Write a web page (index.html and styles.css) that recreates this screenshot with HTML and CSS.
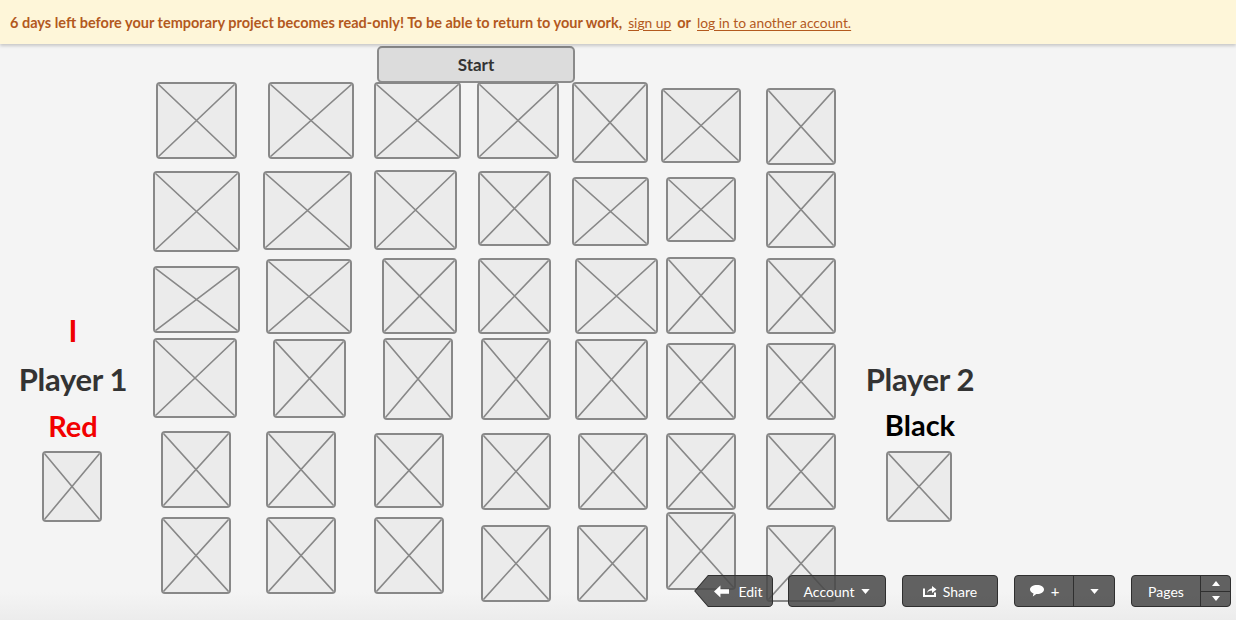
FILE: index.html
```html
<!DOCTYPE html>
<html>
<head>
<meta charset="utf-8">
<link rel="stylesheet" href="styles.css">
</head>
<body>
<div class="banner">
  <span>6 days left before your temporary project becomes read-only! To be able to return to your work,</span>
  <a class="lnk">sign up</a>
  <span>or</span>
  <a class="lnk">log in to another account.</a>
</div>
<div class="canvas">
  <div class="start">Start</div>

  <div class="ph r1c1"><svg viewBox="0 0 100 100" preserveAspectRatio="none"><path d="M0 0L100 100M100 0L0 100"/></svg></div>
  <div class="ph r1c2"><svg viewBox="0 0 100 100" preserveAspectRatio="none"><path d="M0 0L100 100M100 0L0 100"/></svg></div>
  <div class="ph r1c3"><svg viewBox="0 0 100 100" preserveAspectRatio="none"><path d="M0 0L100 100M100 0L0 100"/></svg></div>
  <div class="ph r1c4"><svg viewBox="0 0 100 100" preserveAspectRatio="none"><path d="M0 0L100 100M100 0L0 100"/></svg></div>
  <div class="ph r1c5"><svg viewBox="0 0 100 100" preserveAspectRatio="none"><path d="M0 0L100 100M100 0L0 100"/></svg></div>
  <div class="ph r1c6"><svg viewBox="0 0 100 100" preserveAspectRatio="none"><path d="M0 0L100 100M100 0L0 100"/></svg></div>
  <div class="ph r1c7"><svg viewBox="0 0 100 100" preserveAspectRatio="none"><path d="M0 0L100 100M100 0L0 100"/></svg></div>

  <div class="ph r2c1"><svg viewBox="0 0 100 100" preserveAspectRatio="none"><path d="M0 0L100 100M100 0L0 100"/></svg></div>
  <div class="ph r2c2"><svg viewBox="0 0 100 100" preserveAspectRatio="none"><path d="M0 0L100 100M100 0L0 100"/></svg></div>
  <div class="ph r2c3"><svg viewBox="0 0 100 100" preserveAspectRatio="none"><path d="M0 0L100 100M100 0L0 100"/></svg></div>
  <div class="ph r2c4"><svg viewBox="0 0 100 100" preserveAspectRatio="none"><path d="M0 0L100 100M100 0L0 100"/></svg></div>
  <div class="ph r2c5"><svg viewBox="0 0 100 100" preserveAspectRatio="none"><path d="M0 0L100 100M100 0L0 100"/></svg></div>
  <div class="ph r2c6"><svg viewBox="0 0 100 100" preserveAspectRatio="none"><path d="M0 0L100 100M100 0L0 100"/></svg></div>
  <div class="ph r2c7"><svg viewBox="0 0 100 100" preserveAspectRatio="none"><path d="M0 0L100 100M100 0L0 100"/></svg></div>

  <div class="ph r3c1"><svg viewBox="0 0 100 100" preserveAspectRatio="none"><path d="M0 0L100 100M100 0L0 100"/></svg></div>
  <div class="ph r3c2"><svg viewBox="0 0 100 100" preserveAspectRatio="none"><path d="M0 0L100 100M100 0L0 100"/></svg></div>
  <div class="ph r3c3"><svg viewBox="0 0 100 100" preserveAspectRatio="none"><path d="M0 0L100 100M100 0L0 100"/></svg></div>
  <div class="ph r3c4"><svg viewBox="0 0 100 100" preserveAspectRatio="none"><path d="M0 0L100 100M100 0L0 100"/></svg></div>
  <div class="ph r3c5"><svg viewBox="0 0 100 100" preserveAspectRatio="none"><path d="M0 0L100 100M100 0L0 100"/></svg></div>
  <div class="ph r3c6"><svg viewBox="0 0 100 100" preserveAspectRatio="none"><path d="M0 0L100 100M100 0L0 100"/></svg></div>
  <div class="ph r3c7"><svg viewBox="0 0 100 100" preserveAspectRatio="none"><path d="M0 0L100 100M100 0L0 100"/></svg></div>

  <div class="ph r4c1"><svg viewBox="0 0 100 100" preserveAspectRatio="none"><path d="M0 0L100 100M100 0L0 100"/></svg></div>
  <div class="ph r4c2"><svg viewBox="0 0 100 100" preserveAspectRatio="none"><path d="M0 0L100 100M100 0L0 100"/></svg></div>
  <div class="ph r4c3"><svg viewBox="0 0 100 100" preserveAspectRatio="none"><path d="M0 0L100 100M100 0L0 100"/></svg></div>
  <div class="ph r4c4"><svg viewBox="0 0 100 100" preserveAspectRatio="none"><path d="M0 0L100 100M100 0L0 100"/></svg></div>
  <div class="ph r4c5"><svg viewBox="0 0 100 100" preserveAspectRatio="none"><path d="M0 0L100 100M100 0L0 100"/></svg></div>
  <div class="ph r4c6"><svg viewBox="0 0 100 100" preserveAspectRatio="none"><path d="M0 0L100 100M100 0L0 100"/></svg></div>
  <div class="ph r4c7"><svg viewBox="0 0 100 100" preserveAspectRatio="none"><path d="M0 0L100 100M100 0L0 100"/></svg></div>

  <div class="ph r5c1"><svg viewBox="0 0 100 100" preserveAspectRatio="none"><path d="M0 0L100 100M100 0L0 100"/></svg></div>
  <div class="ph r5c2"><svg viewBox="0 0 100 100" preserveAspectRatio="none"><path d="M0 0L100 100M100 0L0 100"/></svg></div>
  <div class="ph r5c3"><svg viewBox="0 0 100 100" preserveAspectRatio="none"><path d="M0 0L100 100M100 0L0 100"/></svg></div>
  <div class="ph r5c4"><svg viewBox="0 0 100 100" preserveAspectRatio="none"><path d="M0 0L100 100M100 0L0 100"/></svg></div>
  <div class="ph r5c5"><svg viewBox="0 0 100 100" preserveAspectRatio="none"><path d="M0 0L100 100M100 0L0 100"/></svg></div>
  <div class="ph r5c6"><svg viewBox="0 0 100 100" preserveAspectRatio="none"><path d="M0 0L100 100M100 0L0 100"/></svg></div>
  <div class="ph r5c7"><svg viewBox="0 0 100 100" preserveAspectRatio="none"><path d="M0 0L100 100M100 0L0 100"/></svg></div>

  <div class="ph r6c1"><svg viewBox="0 0 100 100" preserveAspectRatio="none"><path d="M0 0L100 100M100 0L0 100"/></svg></div>
  <div class="ph r6c2"><svg viewBox="0 0 100 100" preserveAspectRatio="none"><path d="M0 0L100 100M100 0L0 100"/></svg></div>
  <div class="ph r6c3"><svg viewBox="0 0 100 100" preserveAspectRatio="none"><path d="M0 0L100 100M100 0L0 100"/></svg></div>
  <div class="ph r6c4"><svg viewBox="0 0 100 100" preserveAspectRatio="none"><path d="M0 0L100 100M100 0L0 100"/></svg></div>
  <div class="ph r6c5"><svg viewBox="0 0 100 100" preserveAspectRatio="none"><path d="M0 0L100 100M100 0L0 100"/></svg></div>
  <div class="ph r6c6"><svg viewBox="0 0 100 100" preserveAspectRatio="none"><path d="M0 0L100 100M100 0L0 100"/></svg></div>
  <div class="ph r6c7"><svg viewBox="0 0 100 100" preserveAspectRatio="none"><path d="M0 0L100 100M100 0L0 100"/></svg></div>

  <div class="player p1">
    <div class="turn">I</div>
    <div class="pname">Player 1</div>
    <div class="pcolor red">Red</div>
    <div class="ph pbox1"><svg viewBox="0 0 100 100" preserveAspectRatio="none"><path d="M0 0L100 100M100 0L0 100"/></svg></div>
  </div>

  <div class="player p2">
    <div class="pname">Player 2</div>
    <div class="pcolor black">Black</div>
    <div class="ph pbox2"><svg viewBox="0 0 100 100" preserveAspectRatio="none"><path d="M0 0L100 100M100 0L0 100"/></svg></div>
  </div>
</div>

<div class="toolbar">
  <div class="tb edit">
    <svg class="tag" viewBox="0 0 78 33" preserveAspectRatio="none"><path d="M14 0.5H73.5a4 4 0 0 1 4 4V28.5a4 4 0 0 1-4 4H14L0.8 16.5Z"/></svg>
    <svg class="ico" viewBox="0 0 14 12" width="15" height="13"><path d="M0 6L6 0.5V4H14V8H6V11.5Z" fill="#fff"/></svg>
    <span>Edit</span>
  </div>
  <div class="tb account"><span>Account</span><svg viewBox="0 0 10 6" width="9" height="5"><path d="M0 0H10L5 6Z" fill="#fff"/></svg></div>
  <div class="tb share">
    <svg viewBox="0 0 14 12" width="14" height="12"><path d="M1 3.5V11H12V7.5" fill="none" stroke="#fff" stroke-width="2"/><path d="M4 8C4.5 5 7 3.5 9 3.5V1L13.5 4.5L9 8V5.6C7 5.6 5.4 6.4 4 8Z" fill="#fff"/></svg>
    <span>Share</span>
  </div>
  <div class="tb split comment">
    <div class="seg main"><svg viewBox="0 0 16 14" width="16" height="14"><path d="M8 1C3.9 1 1 3 1 5.5C1 7.3 2.4 8.7 4.5 9.4L3.8 12.5L7.3 10H8C12.1 10 15 8 15 5.5C15 3 12.1 1 8 1Z" fill="#fff"/></svg><span class="plus">+</span></div>
    <div class="seg caret"><svg viewBox="0 0 10 6" width="9" height="5"><path d="M0 0H10L5 6Z" fill="#fff"/></svg></div>
  </div>
  <div class="tb split pages">
    <div class="seg main"><span>Pages</span></div>
    <div class="seg updown">
      <div class="ud"><svg viewBox="0 0 10 6" width="8" height="5"><path d="M0 6H10L5 0Z" fill="#fff"/></svg></div>
      <div class="ud"><svg viewBox="0 0 10 6" width="8" height="5"><path d="M0 0H10L5 6Z" fill="#fff"/></svg></div>
    </div>
  </div>
</div>
</body>
</html>
```

FILE: styles.css
```css
* { box-sizing: border-box; }
html, body { margin: 0; padding: 0; }
body {
  width: 1236px;
  height: 620px;
  overflow: hidden;
  background: linear-gradient(to bottom, #f4f4f4 0, #f4f4f4 592px, #ececec 620px);
  font-family: Lato, "Noto Sans", "Liberation Sans", sans-serif;
  position: relative;
}

.banner {
  height: 44px;
  background: #fef6d9;
  box-shadow: 0 2px 3px rgba(0,0,0,0.18);
  display: flex;
  align-items: center;
  gap: 6px;
  padding-left: 10px;
  padding-top: 1px;
  font-size: 14.5px;
  font-weight: 700;
  color: #b3591e;
  position: relative;
  z-index: 2;
}
.banner .lnk {
  font-weight: 400;
  font-size: 13.8px;
  text-decoration: underline;
  text-underline-offset: 2px;
  color: #b3591e;
}

.canvas {
  position: relative;
  height: 576px;
}

.start {
  position: absolute;
  left: 377px;
  top: 2px;
  width: 198px;
  height: 37px;
  background: #dcdcdc;
  border: 2px solid #8b8b8b;
  border-radius: 5px;
  display: flex;
  align-items: center;
  justify-content: center;
  font-weight: 700;
  font-size: 17px;
  color: #333;
}

.ph {
  position: absolute;
  background: #ebebeb;
  border: 2px solid #888;
  border-radius: 4px;
  overflow: hidden;
}
.ph svg {
  display: block;
  width: 100%;
  height: 100%;
}
.ph path {
  stroke: #888;
  stroke-width: 1.6px;
  vector-effect: non-scaling-stroke;
  fill: none;
}

/* canvas coordinates: page y - 44 */
.r1c1 { left: 156px; top: 38px; width: 81px; height: 77px; }
.r1c2 { left: 268px; top: 38px; width: 86px; height: 77px; }
.r1c3 { left: 374px; top: 38px; width: 87px; height: 77px; }
.r1c4 { left: 477px; top: 38px; width: 82px; height: 77px; }
.r1c5 { left: 572px; top: 38px; width: 76px; height: 81px; }
.r1c6 { left: 661px; top: 44px; width: 80px; height: 75px; }
.r1c7 { left: 766px; top: 44px; width: 70px; height: 77px; }

.r2c1 { left: 153px; top: 127px; width: 87px; height: 81px; }
.r2c2 { left: 263px; top: 127px; width: 89px; height: 79px; }
.r2c3 { left: 374px; top: 126px; width: 83px; height: 80px; }
.r2c4 { left: 478px; top: 127px; width: 73px; height: 75px; }
.r2c5 { left: 572px; top: 133px; width: 77px; height: 69px; }
.r2c6 { left: 666px; top: 133px; width: 70px; height: 65px; }
.r2c7 { left: 766px; top: 127px; width: 70px; height: 77px; }

.r3c1 { left: 153px; top: 222px; width: 87px; height: 67px; }
.r3c2 { left: 266px; top: 215px; width: 86px; height: 75px; }
.r3c3 { left: 382px; top: 214px; width: 75px; height: 76px; }
.r3c4 { left: 478px; top: 214px; width: 73px; height: 76px; }
.r3c5 { left: 575px; top: 214px; width: 83px; height: 76px; }
.r3c6 { left: 666px; top: 213px; width: 70px; height: 77px; }
.r3c7 { left: 766px; top: 214px; width: 70px; height: 76px; }

.r4c1 { left: 153px; top: 294px; width: 84px; height: 80px; }
.r4c2 { left: 273px; top: 295px; width: 73px; height: 79px; }
.r4c3 { left: 383px; top: 294px; width: 70px; height: 82px; }
.r4c4 { left: 481px; top: 294px; width: 70px; height: 82px; }
.r4c5 { left: 575px; top: 295px; width: 73px; height: 81px; }
.r4c6 { left: 666px; top: 299px; width: 70px; height: 77px; }
.r4c7 { left: 766px; top: 299px; width: 70px; height: 77px; }

.r5c1 { left: 161px; top: 387px; width: 70px; height: 77px; }
.r5c2 { left: 266px; top: 387px; width: 70px; height: 77px; }
.r5c3 { left: 374px; top: 389px; width: 70px; height: 75px; }
.r5c4 { left: 481px; top: 389px; width: 70px; height: 77px; }
.r5c5 { left: 578px; top: 389px; width: 70px; height: 77px; }
.r5c6 { left: 666px; top: 389px; width: 70px; height: 77px; }
.r5c7 { left: 766px; top: 389px; width: 70px; height: 77px; }

.r6c1 { left: 161px; top: 473px; width: 70px; height: 77px; }
.r6c2 { left: 266px; top: 473px; width: 70px; height: 77px; }
.r6c3 { left: 374px; top: 473px; width: 70px; height: 77px; }
.r6c4 { left: 481px; top: 481px; width: 70px; height: 77px; }
.r6c5 { left: 577px; top: 481px; width: 71px; height: 77px; }
.r6c6 { left: 666px; top: 468px; width: 70px; height: 78px; }
.r6c7 { left: 766px; top: 481px; width: 70px; height: 77px; }

/* players */
.player {
  position: absolute;
  display: flex;
  flex-direction: column;
  align-items: center;
  font-weight: 700;
}
.p1 { left: 14px; top: 268px; width: 118px; }
.p2 { left: 858px; top: 316px; width: 124px; }
.turn {
  color: #f00000;
  font-size: 30px;
  line-height: 36px;
  height: 48px;
}
.pname {
  color: #333;
  font-size: 31px;
  line-height: 38px;
  letter-spacing: -0.3px;
}
.pcolor {
  font-size: 29px;
  line-height: 38px;
  margin-top: 9px;
}
.p2 .pcolor { margin-top: 8px; }
.red { color: #f20000; }
.black { color: #000; }
.ph.pbox1, .ph.pbox2 {
  position: static;
  margin-top: 6px;
  height: 71px;
}
.pbox1 { width: 60px; margin-left: -3px; }
.pbox2 { width: 66px; margin-left: -2px; }
.p2 .pbox2 { margin-top: 7px; }

/* toolbar */
.toolbar {
  position: absolute;
  left: 694px;
  top: 575px;
  display: flex;
  align-items: center;
  height: 32px;
  font-family: Lato, "Noto Sans", sans-serif;
  font-size: 14px;
  color: #fff;
}
.tb {
  height: 32px;
  border-radius: 4px;
  background: rgba(72, 72, 72, 0.86);
  border: 1px solid #2f2f2f;
  display: flex;
  align-items: center;
  justify-content: center;
  gap: 6px;
}
.edit {
  width: 79px;
  position: relative;
  background: none;
  border: none;
  padding-left: 10px;
  gap: 9px;
}
.edit .tag {
  position: absolute;
  left: 0;
  top: 0;
  width: 79px;
  height: 32px;
}
.edit .tag path {
  fill: rgba(72, 72, 72, 0.86);
  stroke: #2f2f2f;
  stroke-width: 1;
}
.edit .ico, .edit span { position: relative; }
.account { width: 98px; margin-left: 15px; gap: 7px; }
.share { width: 96px; margin-left: 16px; gap: 6px; }
.split { padding: 0; gap: 0; justify-content: flex-start; }
.split .seg {
  height: 100%;
  display: flex;
  align-items: center;
  justify-content: center;
}
.comment { width: 101px; margin-left: 16px; }
.comment .main { width: 59px; border-right: 1px solid #2f2f2f; gap: 6px; }
.comment .caret { flex: 1; }
.plus { font-size: 15px; }
.pages { width: 100px; margin-left: 16px; }
.pages .main { width: 69px; border-right: 1px solid #2f2f2f; }
.pages .updown { flex: 1; flex-direction: column; }
.ud {
  flex: 1;
  width: 100%;
  display: flex;
  align-items: center;
  justify-content: center;
}
.ud + .ud { border-top: 1px solid #2f2f2f; }
```
